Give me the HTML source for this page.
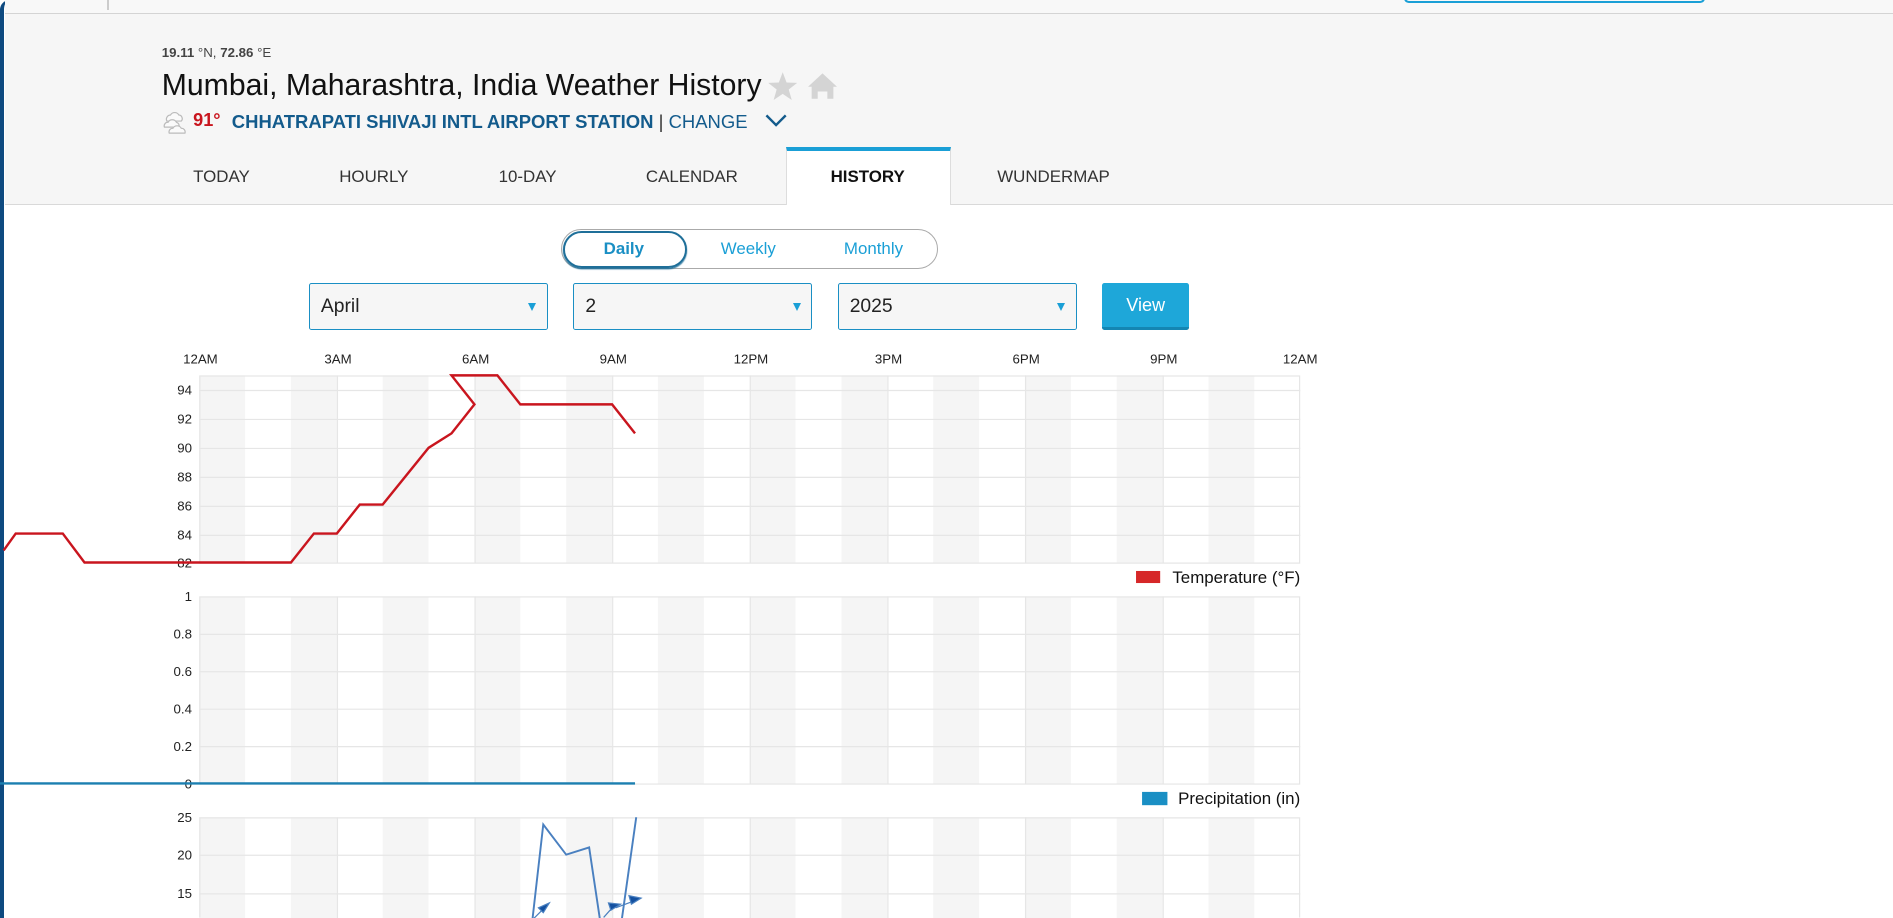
<!DOCTYPE html>
<html style="overflow:hidden;height:918px"><head><meta charset="utf-8"><style>
html,body{margin:0;padding:0;}
body{width:1568px;height:760px;overflow:hidden;zoom:1.20727;background:#fff;font-family:"Liberation Sans",Arial,sans-serif;position:relative;}
.abs{position:absolute;}
#frame{position:absolute;left:0;top:0;width:1568px;height:760px;border-left:4px solid #0e4a80;border-top-left-radius:8px;box-sizing:border-box;}
#top{left:4px;top:0;width:1564px;height:11px;background:#f8f8f8;border-bottom:1px solid #d4d4d4;}
#hdr{left:4px;top:12px;width:1564px;height:157px;background:#f6f6f6;border-bottom:1px solid #d9d9d9;}
.tab{position:absolute;top:138px;font-size:14px;color:#333;}
.sel{position:absolute;top:234px;height:39px;border:1px solid #1a8fc4;border-radius:2px;background:#f6f6f6;box-sizing:border-box;font-size:16px;color:#222;padding:10px 0 0 9px;}
.sel:after{content:"";position:absolute;right:9px;top:16px;border-left:4px solid transparent;border-right:4px solid transparent;border-top:7px solid #1a9fd6;}
svg text{font-family:"Liberation Sans",Arial,sans-serif;}
</style></head><body>
<div id="frame"></div>
<div class="abs" id="top"></div>
<div class="abs" style="left:89px;top:0;width:1px;height:8px;background:#ccc"></div>
<div class="abs" style="left:1163px;top:-4px;width:246px;height:5px;border:2px solid #1a9fd6;border-top:none;border-radius:0 0 4px 4px"></div>
<div class="abs" id="hdr"></div>
<div class="abs" style="left:134px;top:37px;font-size:11px;color:#444"><b>19.11</b> °N, <b>72.86</b> °E</div>
<div class="abs" style="left:134px;top:57px;font-size:25px;color:#111;white-space:nowrap">Mumbai, Maharashtra, India Weather History</div>
<svg class="abs" style="left:635px;top:59px" width="60" height="26" viewBox="0 0 60 26">
<polygon points="13,1 16.2,9.5 25,9.8 18,15.3 20.5,24 13,19 5.5,24 8,15.3 1,9.8 9.8,9.5" fill="#d4d4d4"/>
<path d="M46 2 L58 13 L55 13 L55 23 L50 23 L50 17 L42 17 L42 23 L37 23 L37 13 L34 13 Z" fill="#d4d4d4"/>
</svg>
<svg class="abs" style="left:134px;top:90px" width="22" height="22" viewBox="0 0 22 22" fill="#fafafa" stroke="#bbb" stroke-width="1">
<path d="M4 10 a3.5 3.5 0 0 1 3-5 a4 4 0 0 1 7 0 a3 3 0 0 1 2 5 Z"/>
<path d="M2 15 a3 3 0 0 1 3-4 a4 4 0 0 1 7 0 a3 3 0 0 1 2 4 Z"/>
<path d="M6 20 a3 3 0 0 1 3-4 a4 4 0 0 1 7 0 a3 3 0 0 1 3 4 Z"/>
</svg>
<div class="abs" style="left:160px;top:91px;font-size:15px;font-weight:bold;color:#c9151e">91°</div>
<div class="abs" style="left:192px;top:92px;font-size:15.3px;font-weight:bold;color:#135b8c;white-space:nowrap">CHHATRAPATI SHIVAJI INTL AIRPORT STATION <span style="font-weight:normal;color:#333">|</span> <span style="font-weight:normal">CHANGE</span></div>
<svg class="abs" style="left:633px;top:94px" width="20" height="12" viewBox="0 0 20 12"><path d="M2 2 L10 10 L18 2" fill="none" stroke="#135b8c" stroke-width="2"/></svg>
<div class="tab" style="left:160px">TODAY</div>
<div class="tab" style="left:281px">HOURLY</div>
<div class="tab" style="left:413px">10-DAY</div>
<div class="tab" style="left:535px">CALENDAR</div>
<div class="abs" style="left:651px;top:122px;width:137px;height:48px;background:#fff;border-top:4px solid #1a9fd6;border-left:1px solid #ddd;border-right:1px solid #ddd;box-sizing:border-box"></div>
<div class="tab" style="left:688px;font-weight:bold;color:#111">HISTORY</div>
<div class="tab" style="left:826px">WUNDERMAP</div>

<div class="abs" style="left:465px;top:190px;width:312px;height:33px;border:1px solid #aaa;border-radius:17px;box-sizing:border-box"></div>
<div class="abs" style="left:466px;top:191px;width:103px;height:31px;border:2px solid #1f6f99;border-radius:16px;box-sizing:border-box;box-shadow:0 1px 1px #1f6f99"></div>
<div class="abs" style="left:500px;top:198px;font-size:14px;font-weight:bold;color:#1a8fc4">Daily</div>
<div class="abs" style="left:597px;top:198px;font-size:14px;color:#1a9fd6">Weekly</div>
<div class="abs" style="left:699px;top:198px;font-size:14px;color:#1a9fd6">Monthly</div>

<div class="sel" style="left:256px;width:198px">April</div>
<div class="sel" style="left:475px;width:198px">2</div>
<div class="sel" style="left:694px;width:198px">2025</div>
<div class="abs" style="left:913px;top:234px;width:72px;height:39px;background:#1ea7d9;border-bottom:3px solid #1486b3;border-radius:2px;box-sizing:border-box;color:#fff;font-size:15px;text-align:center;line-height:37px">View</div>

<svg class="abs" style="left:0;top:285px" width="1100" height="475" viewBox="0 285 1100 475">
<defs>
<g id="stripes">
<rect x="165" width="38" height="1000" fill="#f5f5f5"/><rect x="241" width="38" height="1000" fill="#f5f5f5"/><rect x="317" width="38" height="1000" fill="#f5f5f5"/><rect x="393" width="38" height="1000" fill="#f5f5f5"/><rect x="469" width="38" height="1000" fill="#f5f5f5"/><rect x="545" width="38" height="1000" fill="#f5f5f5"/><rect x="621" width="38" height="1000" fill="#f5f5f5"/><rect x="697" width="38" height="1000" fill="#f5f5f5"/><rect x="773" width="38" height="1000" fill="#f5f5f5"/><rect x="849" width="38" height="1000" fill="#f5f5f5"/><rect x="925" width="38" height="1000" fill="#f5f5f5"/><rect x="1001" width="38" height="1000" fill="#f5f5f5"/>
<g stroke="#e6e6e6" stroke-width="1"><path d="M279.5 0V1000M393.5 0V1000M507.5 0V1000M621.5 0V1000M735.5 0V1000M849.5 0V1000M963.5 0V1000"/></g>
</g>
<clipPath id="c1"><rect x="165" y="311" width="912" height="155"/></clipPath>
<clipPath id="c2"><rect x="165" y="494" width="912" height="155"/></clipPath>
<clipPath id="c3"><rect x="165" y="677" width="912" height="90"/></clipPath>
</defs>
<g font-size="11" fill="#222" text-anchor="middle">
<text x="166" y="301">12AM</text><text x="280" y="301">3AM</text><text x="394" y="301">6AM</text><text x="508" y="301">9AM</text><text x="622" y="301">12PM</text><text x="736" y="301">3PM</text><text x="850" y="301">6PM</text><text x="964" y="301">9PM</text><text x="1077" y="301">12AM</text>
</g>
<g clip-path="url(#c1)"><use href="#stripes"/></g>
<rect x="165.5" y="311.5" width="911" height="155" fill="none" stroke="#e6e6e6"/>
<g stroke="#e6e6e6"><path d="M165 323.5H1077M165 347.5H1077M165 371.5H1077M165 395.5H1077M165 419.5H1077M165 443.5H1077"/></g>
<g font-size="11" fill="#222" text-anchor="end"><text x="159" y="327">94</text><text x="159" y="351">92</text><text x="159" y="375">90</text><text x="159" y="399">88</text><text x="159" y="423">86</text><text x="159" y="447">84</text><text x="159" y="470">82</text></g>
<polyline fill="none" stroke="#c9151e" stroke-width="2" points="3,456 13,442 52,442 70,466 241,466 260,442 279,442 298,418 317,418 355,371 374,359 393,335 374,311 412,311 431,335 507,335 526,359"/>
<rect x="941" y="473" width="20" height="10" fill="#d62728"/>
<text x="1077" y="483" font-size="14" text-anchor="end" fill="#111">Temperature (°F)</text>
<g clip-path="url(#c2)"><use href="#stripes"/></g>
<rect x="165.5" y="494.5" width="911" height="155" fill="none" stroke="#e6e6e6"/>
<g stroke="#e6e6e6"><path d="M165 525.5H1077M165 556.5H1077M165 587.5H1077M165 618.5H1077"/></g>
<g font-size="11" fill="#222" text-anchor="end"><text x="159" y="498">1</text><text x="159" y="529">0.8</text><text x="159" y="560">0.6</text><text x="159" y="591">0.4</text><text x="159" y="622">0.2</text><text x="159" y="653">0</text></g>
<line x1="0" y1="649" x2="526" y2="649" stroke="#1b7fb0" stroke-width="2"/>
<rect x="946" y="656" width="21" height="11" fill="#1a8fc4"/>
<text x="1077" y="666" font-size="14" text-anchor="end" fill="#111">Precipitation (in)</text>
<g clip-path="url(#c3)"><use href="#stripes"/></g>
<path d="M165.5 760V677.5H1076.5V760" fill="none" stroke="#e6e6e6"/>
<g stroke="#e6e6e6"><path d="M165 708.5H1077M165 740.5H1077"/></g>
<g font-size="11" fill="#222" text-anchor="end"><text x="159" y="681">25</text><text x="159" y="712">20</text><text x="159" y="744">15</text></g>
<polyline fill="none" stroke="#4a80c0" stroke-width="1.6" points="441,762 450,683 469,708 488,702 497,762"/>
<polyline fill="none" stroke="#4a80c0" stroke-width="1.6" points="515,762 527,677"/>
<g fill="#1350a0" stroke="#4a80c0" stroke-width="1">
<line x1="441" y1="762" x2="452" y2="751"/><polygon points="455,748 446,752 450,756"/>
<line x1="500" y1="760" x2="508" y2="751"/><polygon points="514,749 504,748 506,754"/>
<line x1="510" y1="752" x2="526" y2="746"/><polygon points="531,744 521,742 523,749"/>
</g>
</svg>
</body></html>
